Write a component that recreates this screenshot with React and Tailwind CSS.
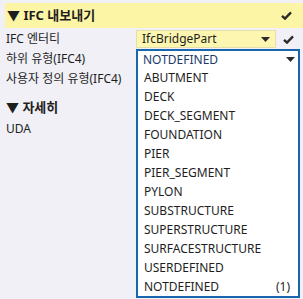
import { Fragment } from "react";

const font = { fontFamily: '"Noto Sans", "Noto Sans CJK KR", sans-serif' };

const items = [
  "ABUTMENT",
  "DECK",
  "DECK_SEGMENT",
  "FOUNDATION",
  "PIER",
  "PIER_SEGMENT",
  "PYLON",
  "SUBSTRUCTURE",
  "SUPERSTRUCTURE",
  "SURFACESTRUCTURE",
  "USERDEFINED",
];

function Check() {
  return (
    <svg width="11" height="9" viewBox="0 0 11 9">
      <path d="M1 4.8 L4 7.6 L10 1.4" fill="none" stroke="#2b2b2b" strokeWidth="2.4" />
    </svg>
  );
}

function Arrow() {
  return (
    <svg width="9" height="5" viewBox="0 0 9 5">
      <path d="M0 0 H9 L4.5 5 Z" fill="#2b2b2b" />
    </svg>
  );
}

function Row({ label, children }) {
  return (
    <div className="flex h-[20px] items-center">
      <div className="w-[136px] pl-[6px] whitespace-nowrap">{label}</div>
      {children}
    </div>
  );
}

export default function App() {
  return (
    <div
      className="relative h-[299px] w-[303px] overflow-hidden bg-[#f0f0f6] text-[12px] text-[#1e1e1e]"
      style={font}
    >
      <div className="ml-[5px] mt-[3px] flex h-[25px] items-center justify-between bg-[#fdf5a6] pl-[2px] pr-[11px]">
        <span className="text-[13px] font-bold">▼ IFC 내보내기</span>
        <Check />
      </div>

      <div className="pt-[1px]">
        <Row label="IFC 엔터티">
          <div className="flex h-[18px] w-[140px] items-center justify-between border border-[#e6e0a8] bg-[#fdf6b0] pl-[5px] pr-[5px]">
            <span>IfcBridgePart</span>
            <Arrow />
          </div>
          <div className="ml-[7px]">
            <Check />
          </div>
        </Row>
        <Row label="하위 유형(IFC4)" />
        <Row label="사용자 정의 유형(IFC4)" />
        <div className="flex h-[30px] items-end pb-[2px] pl-[6px]">
          <span className="text-[13px] font-bold">▼ 자세히</span>
        </div>
        <Row label="UDA" />
      </div>

      <div className="absolute left-[136px] top-[49px] w-[164px] border-2 border-[#1a65b0] bg-white">
        <div className="flex h-[17px] items-center justify-between pl-[5px] pr-[3px] text-[#1b3a6b]">
          <span>NOTDEFINED</span>
          <Arrow />
        </div>
        {items.map((item) => (
          <Fragment key={item}>
            <div className="flex h-[19px] items-center pl-[6px]">{item}</div>
          </Fragment>
        ))}
        <div className="flex h-[19px] items-center justify-between pl-[6px] pr-[8px]">
          <span>NOTDEFINED</span>
          <span>(1)</span>
        </div>
      </div>
    </div>
  );
}
